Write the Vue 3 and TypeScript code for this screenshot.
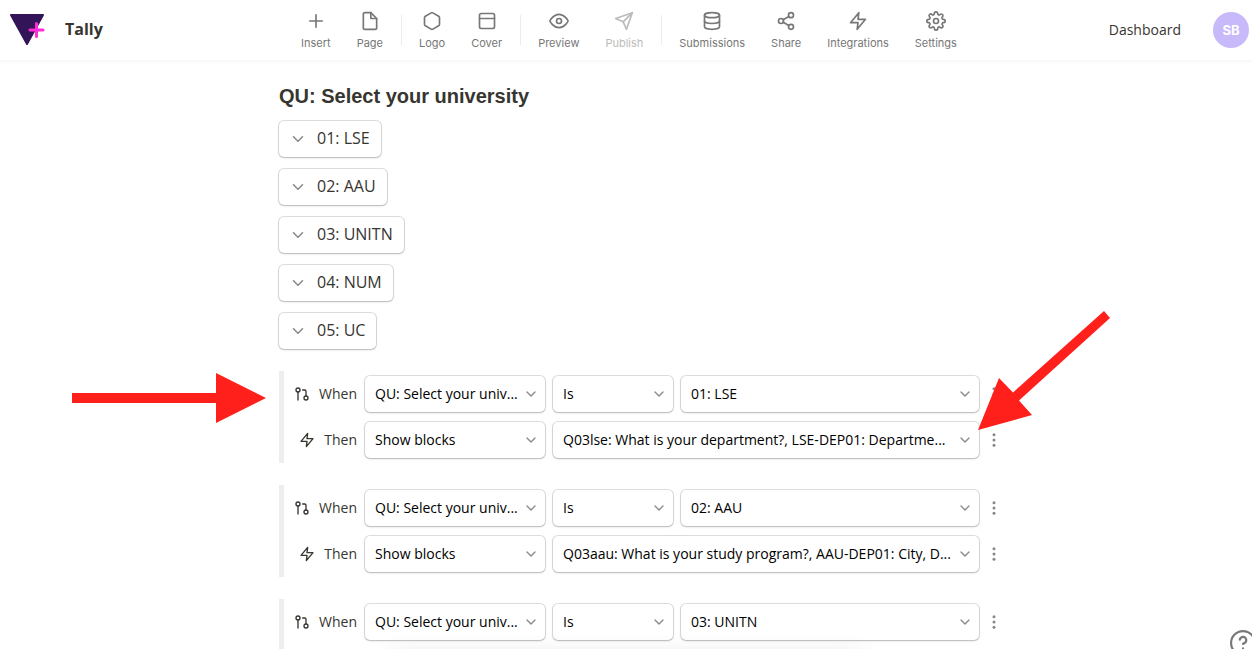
<script setup lang="ts">
interface Tool {
  label: string
  paths: string[]
  disabled?: boolean
}
interface Rule {
  answer: string
  blocks?: string
}

const zap = 'M13 2 3 14h9l-1 8 10-12h-9l1-8z'
const chevron = 'm6 9 6 6 6-6'

const toolGroups: Tool[][] = [
  [
    { label: 'Insert', paths: ['M12 4.500v15', 'M4.500 12h15'] },
    { label: 'Page', paths: ['M13 2H6a2 2 0 0 0-2 2v16a2 2 0 0 0 2 2h12a2 2 0 0 0 2-2V9z', 'M13 2v7h7'] },
  ],
  [
    { label: 'Logo', paths: ['M21 16V8a2 2 0 0 0-1-1.73l-7-4a2 2 0 0 0-2 0l-7 4A2 2 0 0 0 3 8v8a2 2 0 0 0 1 1.73l7 4a2 2 0 0 0 2 0l7-4A2 2 0 0 0 21 16z'] },
    { label: 'Cover', paths: ['M5 3h14a2 2 0 0 1 2 2v14a2 2 0 0 1-2 2H5a2 2 0 0 1-2-2V5a2 2 0 0 1 2-2z', 'M3 9h18'] },
  ],
  [
    { label: 'Preview', paths: ['M1 12s4-8 11-8 11 8 11 8-4 8-11 8-11-8-11-8z', 'M15 12a3 3 0 1 1-6 0 3 3 0 0 1 6 0z'] },
    { label: 'Publish', paths: ['M22 2 11 13', 'm22 2-7 20-4-9-9-4 20-7z'], disabled: true },
  ],
  [
    { label: 'Submissions', paths: ['M21 5c0 1.66-4 3-9 3S3 6.66 3 5s4-3 9-3 9 1.34 9 3z', 'M21 12c0 1.66-4 3-9 3s-9-1.34-9-3', 'M3 5v14c0 1.66 4 3 9 3s9-1.34 9-3V5'] },
    { label: 'Share', paths: ['M21 5a3 3 0 1 1-6 0 3 3 0 0 1 6 0z', 'M9 12a3 3 0 1 1-6 0 3 3 0 0 1 6 0z', 'M21 19a3 3 0 1 1-6 0 3 3 0 0 1 6 0z', 'm8.59 13.51 6.83 3.98', 'm15.41 6.51-6.82 3.98'] },
    { label: 'Integrations', paths: [zap] },
    {
      label: 'Settings',
      paths: [
        'M15 12a3 3 0 1 1-6 0 3 3 0 0 1 6 0z',
        'M19.4 15a1.65 1.65 0 0 0 .33 1.82l.06.06a2 2 0 1 1-2.83 2.83l-.06-.06a1.65 1.65 0 0 0-2.8 1.17V21a2 2 0 0 1-4 0v-.09a1.65 1.65 0 0 0-2.9-1.26l-.06.06a2 2 0 1 1-2.83-2.83l.06-.06A1.65 1.65 0 0 0 3.09 14H3a2 2 0 0 1 0-4h.09a1.65 1.65 0 0 0 1.26-2.9l-.06-.06a2 2 0 1 1 2.83-2.83l.06.06A1.65 1.65 0 0 0 10 3.09V3a2 2 0 0 1 4 0v.09a1.65 1.65 0 0 0 2.82 1.18l.06-.06a2 2 0 1 1 2.83 2.83l-.06.06A1.65 1.65 0 0 0 20.91 10H21a2 2 0 0 1 0 4h-.09a1.65 1.65 0 0 0-1.51 1z',
      ],
    },
  ],
]

const options: string[] = ['01: LSE', '02: AAU', '03: UNITN', '04: NUM', '05: UC']

const rules: Rule[] = [
  { answer: '01: LSE', blocks: 'Q03lse: What is your department?, LSE-DEP01: Departme...' },
  { answer: '02: AAU', blocks: 'Q03aau: What is your study program?, AAU-DEP01: City, D...' },
  { answer: '03: UNITN' },
]
</script>

<template>
  <div class="page">
    <header class="topbar">
      <div class="brand">
        <svg class="brand-mark" viewBox="0 0 36 34" aria-hidden="true">
          <path d="M2 2h32L18 31z" fill="#341459" stroke="#341459" stroke-width="2" stroke-linejoin="round" />
          <path d="M27.500 10.500v13M21 17h13" fill="none" stroke="#ff2bd9" stroke-width="3" stroke-linecap="round" />
        </svg>
        <span class="brand-name">Tally</span>
      </div>
      <nav class="toolbar" aria-label="Form tools">
        <div v-for="(group, g) in toolGroups" :key="g" class="tool-group">
          <button v-for="tool in group" :key="tool.label" type="button" class="tool" :disabled="tool.disabled">
            <svg class="icon tool-icon" viewBox="0 0 24 24" aria-hidden="true">
              <path v-for="d in tool.paths" :key="d" :d="d" />
            </svg>
            <span>{{ tool.label }}</span>
          </button>
        </div>
      </nav>
      <div class="account">
        <a class="dashboard" href="#dashboard">Dashboard</a>
        <button type="button" class="avatar">SB</button>
      </div>
    </header>

    <main class="content">
      <h1>QU: Select your university</h1>
      <div class="options">
        <button v-for="option in options" :key="option" type="button" class="option">
          <svg class="icon option-icon" viewBox="0 0 24 24" aria-hidden="true"><path :d="chevron" /></svg>
          <span>{{ option }}</span>
        </button>
      </div>

      <section v-for="(rule, i) in rules" :key="rule.answer" class="rule">
        <div class="row">
          <label class="row-label" :for="`when-${i}`">
            <svg class="icon row-icon" viewBox="0 0 24 24" aria-hidden="true">
              <circle cx="18" cy="18" r="3" /><circle cx="6" cy="6" r="3" />
              <path d="M13 6h3a2 2 0 0 1 2 2v7M6 9v12" />
            </svg>
            <span>When</span>
          </label>
          <div class="field subject">
            <select :id="`when-${i}`"><option>QU: Select your univ...</option></select>
            <svg class="icon caret" viewBox="0 0 24 24" aria-hidden="true"><path :d="chevron" /></svg>
          </div>
          <div class="field operator">
            <select aria-label="Comparison"><option>Is</option></select>
            <svg class="icon caret" viewBox="0 0 24 24" aria-hidden="true"><path :d="chevron" /></svg>
          </div>
          <div class="field value">
            <select aria-label="Answer"><option>{{ rule.answer }}</option></select>
            <svg class="icon caret" viewBox="0 0 24 24" aria-hidden="true"><path :d="chevron" /></svg>
          </div>
          <button type="button" class="more" aria-label="More actions">
            <svg viewBox="0 0 24 24" aria-hidden="true"><circle cx="12" cy="5" r="2" /><circle cx="12" cy="12" r="2" /><circle cx="12" cy="19" r="2" /></svg>
          </button>
        </div>
        <div v-if="rule.blocks" class="row">
          <label class="row-label" :for="`then-${i}`">
            <svg class="icon row-icon" viewBox="0 0 24 24" aria-hidden="true"><path :d="zap" /></svg>
            <span>Then</span>
          </label>
          <div class="field subject">
            <select :id="`then-${i}`"><option>Show blocks</option></select>
            <svg class="icon caret" viewBox="0 0 24 24" aria-hidden="true"><path :d="chevron" /></svg>
          </div>
          <div class="field value">
            <select aria-label="Blocks to show"><option>{{ rule.blocks }}</option></select>
            <svg class="icon caret" viewBox="0 0 24 24" aria-hidden="true"><path :d="chevron" /></svg>
          </div>
          <button type="button" class="more" aria-label="More actions">
            <svg viewBox="0 0 24 24" aria-hidden="true"><circle cx="12" cy="5" r="2" /><circle cx="12" cy="12" r="2" /><circle cx="12" cy="19" r="2" /></svg>
          </button>
        </div>
      </section>

      <svg class="arrow arrow-right" viewBox="0 0 194 50" aria-hidden="true">
        <path d="M0 20h144V0l50 25-50 25V30H0z" />
      </svg>
      <svg class="arrow arrow-down" viewBox="0 0 132 120" aria-hidden="true">
        <path d="M0 120 21 68l14 14.500L126 1l6 7-91 82.500L54 105z" />
      </svg>
    </main>

    <div class="dock" aria-hidden="true"></div>
    <button type="button" class="help" aria-label="Help">
      <svg class="icon" viewBox="0 0 24 24" aria-hidden="true">
        <circle cx="12" cy="12" r="11" />
        <path d="M9 9a3 3 0 0 1 6 .8c0 2-3 3-3 3M12 17h.01" />
      </svg>
    </button>
  </div>
</template>

<style>
body {
  margin: 0;
  background: #fff;
  overflow: hidden;
}
</style>

<style scoped>
.page {
  height: 100vh;
  overflow: hidden;
  box-sizing: border-box;
  color: #37352f;
  font-family: "Open Sans", "Liberation Sans", sans-serif;
  font-size: 14px;
}
button,
select {
  font: inherit;
  border: 0;
  padding: 0;
  background: none;
  color: inherit;
}
.icon {
  display: block;
  flex: none;
  fill: none;
  stroke: currentColor;
  stroke-width: 2;
  stroke-linecap: round;
  stroke-linejoin: round;
}
.topbar {
  display: grid;
  grid-template-columns: 1fr auto 1fr;
  align-items: center;
  height: 60px;
  box-sizing: border-box;
  padding: 0 3px 0 9px;
  background: #fff;
  box-shadow: 0 1px 4px rgba(0, 0, 0, 0.05);
}
.brand {
  display: flex;
  align-items: center;
  gap: 20px;
}
.brand-mark {
  width: 36px;
  height: 34px;
}
.brand-name {
  padding-bottom: 2px;
  font-size: 16px;
  font-weight: 700;
}
.toolbar {
  display: flex;
}
.tool-group {
  display: flex;
}
.tool-group + .tool-group {
  margin-left: 5px;
  padding-left: 5px;
  background: linear-gradient(#ececec, #ececec) left center / 1px 30px no-repeat;
}
.tool {
  display: flex;
  flex-direction: column;
  align-items: center;
  gap: 6px;
  padding: 0 13px;
  color: #777;
  font-family: Inter, "Liberation Sans", sans-serif;
  font-size: 11px;
  line-height: 12px;
}
.tool:disabled {
  color: #bbb;
}
.tool-icon {
  width: 20px;
  height: 20px;
}
.account {
  display: flex;
  align-items: center;
  justify-content: flex-end;
  gap: 32px;
}
.dashboard {
  padding-bottom: 2px;
  color: inherit;
  text-decoration: none;
}
.avatar {
  width: 36px;
  height: 36px;
  border-radius: 50%;
  background: #c7b9fa;
  color: #fff;
  font-family: Inter, "Liberation Sans", sans-serif;
  font-size: 13px;
  font-weight: 700;
}
.content {
  position: relative;
  max-width: 700px;
  margin: 0 auto;
  padding: 22px 0 0;
  left: 3px;
}
h1 {
  margin: 0 0 11px;
  font-family: "Liberation Sans", Arial, sans-serif;
  font-size: 20px;
  font-weight: 700;
  line-height: 28px;
}
.options {
  display: flex;
  flex-direction: column;
  align-items: flex-start;
  gap: 12px;
  margin-bottom: 22px;
}
.option,
.field {
  height: 36px;
  border-radius: 5px;
  background: #fff;
  box-shadow: 0 0 0 1px rgba(61, 59, 59, 0.16), 0 1px 2px rgba(61, 59, 59, 0.24);
}
.option {
  display: flex;
  align-items: center;
  gap: 10px;
  padding: 0 11px 0 10px;
  font-size: 16px;
}
.option span,
.row-label span {
  padding-bottom: 2px;
}
.option-icon {
  width: 18px;
  height: 18px;
  color: #888;
}
.rule {
  display: flex;
  flex-direction: column;
  gap: 10px;
  min-height: 82px;
  margin: 0 -22px 22px 0;
  padding: 5px 0;
  border-left: 5px solid #eee;
}
.row {
  display: flex;
  align-items: center;
  gap: 8px;
}
.row-label {
  display: flex;
  align-items: center;
  justify-content: flex-end;
  gap: 9px;
  width: 73px;
}
.row-icon {
  width: 16px;
  height: 16px;
}
.field {
  position: relative;
}
.subject {
  width: 180px;
}
.operator {
  width: 120px;
}
.value {
  flex: 1;
  min-width: 0;
}
select {
  display: block;
  width: 100%;
  height: 100%;
  padding: 0 24px 2px 10px;
  appearance: none;
  color: #000;
  text-overflow: ellipsis;
}
.caret {
  position: absolute;
  top: 10px;
  right: 6px;
  width: 16px;
  height: 16px;
  color: #888;
  pointer-events: none;
}
.more {
  display: flex;
  justify-content: center;
  width: 14px;
  height: 18px;
}
.more svg {
  flex: none;
  width: 18px;
  height: 18px;
  fill: #888;
}
.arrow {
  position: absolute;
  fill: #ff201c;
  pointer-events: none;
}
.arrow-right {
  top: 313px;
  left: -207px;
  width: 194px;
  height: 50px;
}
.arrow-down {
  top: 250px;
  left: 699px;
  width: 132px;
  height: 120px;
}
.dock {
  position: fixed;
  bottom: -56px;
  left: 50%;
  width: 480px;
  height: 50px;
  margin-left: -240px;
  border-radius: 8px;
  box-shadow: 0 0 24px rgba(0, 0, 0, 0.1);
  pointer-events: none;
}
.help {
  position: fixed;
  right: -4px;
  bottom: -7px;
  color: #777;
}
.help svg {
  width: 26px;
  height: 26px;
}
</style>
